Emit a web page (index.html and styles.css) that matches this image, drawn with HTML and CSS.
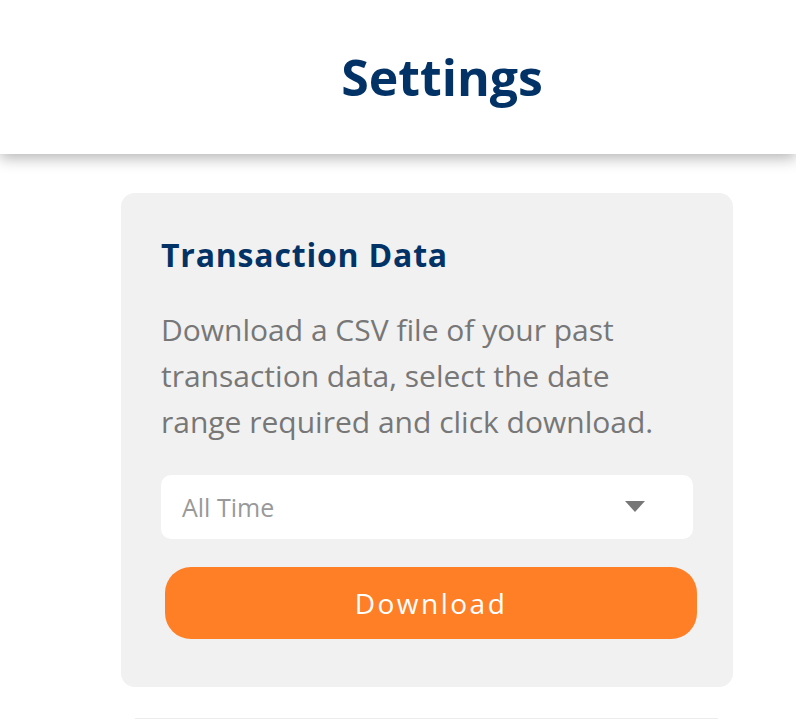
FILE: index.html
```html
<!DOCTYPE html>
<html lang="en">
<head>
  <meta charset="UTF-8">
  <meta name="viewport" content="width=device-width, initial-scale=1.0">
  <title>Settings</title>
  <link rel="stylesheet" href="styles.css">
</head>
<body>
  <header class="top-bar">
    <h1>Settings</h1>
  </header>

  <main class="content">
    <section class="card">
      <h2>Transaction Data</h2>
      <p>Download a CSV file of your past transaction data, select the date range required and click download.</p>
      <div class="select-box">
        <span>All Time</span>
        <svg class="caret" width="20" height="12" viewBox="0 0 20 12"><path d="M0 0h20L10 11z" fill="#777"/></svg>
      </div>
      <button type="button" class="btn">Download</button>
    </section>
    <div class="next-card"></div>
  </main>
</body>
</html>
```

FILE: styles.css
```css
body {
  margin: 0;
  padding: 0;
  font-family: "Open Sans", "Noto Sans", sans-serif;
  background: #fff;
  overflow: hidden;
}
.top-bar {
  height: 154px;
  background: #fff;
  box-shadow: 0 4px 14px rgba(0, 0, 0, 0.3);
  display: flex;
  align-items: center;
  justify-content: center;
  padding-left: 88px;
  position: relative;
}
.top-bar h1 {
  margin: 0;
  color: #033366;
  font-size: 50px;
  line-height: 60px;
  font-weight: 700;
}
.content {
  padding: 39px 0 0 121px;
}
.card {
  width: 612px;
  box-sizing: border-box;
  background: #f1f1f1;
  border-radius: 14px;
  padding: 42px 30px 48px 40px;
}
.card h2 {
  margin: 0 0 32px;
  color: #033366;
  font-size: 32px;
  line-height: 40px;
  letter-spacing: 0.8px;
  font-weight: 700;
}
.card p {
  margin: 0 0 30px;
  max-width: 510px;
  color: #777;
  font-size: 30px;
  line-height: 46px;
}
.select-box {
  height: 64px;
  width: 532px;
  background: #fff;
  border-radius: 10px;
  display: flex;
  align-items: center;
  justify-content: space-between;
  padding: 0 48px 0 21px;
  box-sizing: border-box;
  color: #999;
  font-size: 25px;
}
.btn {
  display: block;
  margin: 28px 0 0 4px;
  width: 532px;
  height: 72px;
  border: none;
  border-radius: 26px;
  background: #ff7f27;
  color: #fff;
  font-family: inherit;
  font-size: 28px;
  letter-spacing: 2.5px;
  cursor: pointer;
}
.next-card {
  margin: 31px 0 0 14px;
  width: 583px;
  height: 0;
  border-top: 1px solid #ececec;
}
```
